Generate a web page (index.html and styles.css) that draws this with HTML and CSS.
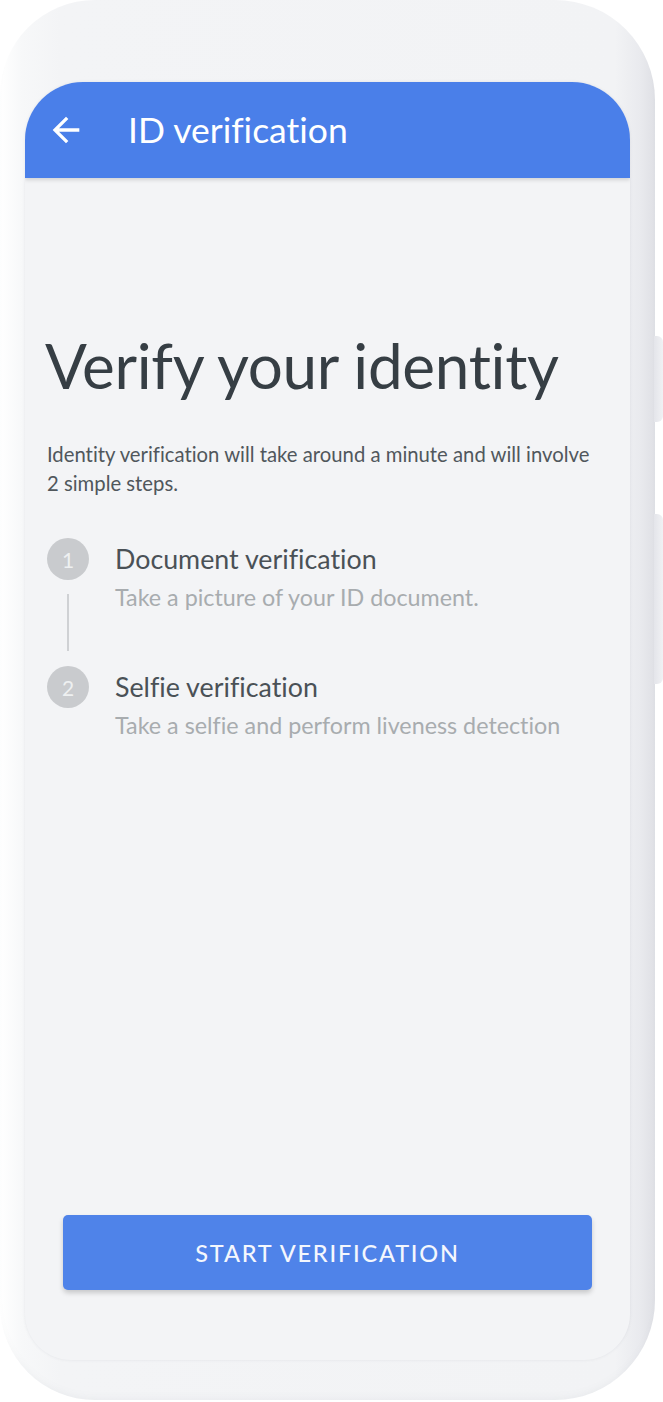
FILE: index.html
```html
<!DOCTYPE html>
<html lang="en">
<head>
<meta charset="utf-8">
<title>ID verification</title>
<link rel="stylesheet" href="styles.css">
</head>
<body>
<div class="phone">
  <div class="screen">
    <header class="appbar">
      <svg class="back" viewBox="0 0 24 24" aria-hidden="true"><path d="M20 11H7.83l5.59-5.59L12 4l-8 8 8 8 1.41-1.41L7.83 13H20v-2z"/></svg>
      <h1 class="appbar-title">ID verification</h1>
    </header>
    <main class="content">
      <h2 class="headline">Verify your identity</h2>
      <p class="intro">Identity verification will take around a minute and will involve 2 simple steps.</p>
      <ol class="steps">
        <li class="step">
          <div class="marker"><span class="dot">1</span><span class="connector"></span></div>
          <div class="step-text">
            <div class="step-title">Document verification</div>
            <div class="step-sub">Take a picture of your ID document.</div>
          </div>
        </li>
        <li class="step">
          <div class="marker"><span class="dot">2</span></div>
          <div class="step-text">
            <div class="step-title">Selfie verification</div>
            <div class="step-sub">Take a selfie and perform liveness detection</div>
          </div>
        </li>
      </ol>
    </main>
    <div class="actions">
      <button class="primary">START VERIFICATION</button>
    </div>
  </div>
</div>
</body>
</html>
```

FILE: styles.css
```css
html, body {
  margin: 0;
  padding: 0;
  background: #ffffff;
}
body {
  width: 663px;
  height: 1402px;
  overflow: hidden;
  font-family: "Lato", "Open Sans", sans-serif;
  font-variant-ligatures: none;
}
.phone {
  position: relative;
  width: 655px;
  height: 1400px;
  box-sizing: border-box;
  padding: 82px 25px 40px 25px;
  border-radius: 95px 100px 100px 95px;
  background: linear-gradient(to right, #ffffff 0px, #f7f8f9 22px, #f3f4f6 60px, #f2f3f5 615px, #e9eaee 640px, #dfe0e5 655px);
  box-shadow: inset 0 -6px 10px -6px rgba(120,125,140,0.10);
}
.phone::before,
.phone::after {
  content: "";
  position: absolute;
  right: -8px;
  width: 9px;
  border-radius: 0 6px 6px 0;
  background: linear-gradient(to right, #e4e5ea, #f0f1f4);
}
.phone::before { top: 336px; height: 86px; }
.phone::after { top: 514px; height: 170px; }
.screen {
  display: flex;
  flex-direction: column;
  height: 1278px;
  background: #f3f4f6;
  border-radius: 58px 58px 46px 46px;
  overflow: hidden;
  box-shadow: 0 0 3px rgba(100,105,120,0.12);
}
.appbar {
  display: flex;
  align-items: center;
  height: 96px;
  flex: none;
  background: #4a7fe9;
  box-shadow: 0 2px 4px rgba(0,0,0,0.14);
  position: relative;
  z-index: 1;
}
.back {
  width: 40px;
  height: 40px;
  margin-left: 21px;
  fill: #ffffff;
}
.appbar-title {
  margin: 0 0 0 42px;
  font-size: 35.5px;
  font-weight: 400;
  color: #ffffff;
  line-height: 1.2;
}
.content {
  flex: 1;
  padding: 150px 20px 0 20px;
}
.headline {
  margin: 0;
  font-size: 62px;
  font-weight: 400;
  letter-spacing: -0.3px;
  line-height: 1.2;
  color: #363e44;
}
.intro {
  margin: 38px 0 0 2px;
  max-width: 556px;
  font-size: 20.3px;
  line-height: 29px;
  color: #50575c;
}
.steps {
  list-style: none;
  margin: 40px 0 0 2px;
  padding: 0;
}
.step {
  display: flex;
}
.marker {
  width: 42px;
  display: flex;
  flex-direction: column;
  align-items: center;
  flex: none;
}
.dot {
  width: 42px;
  height: 42px;
  border-radius: 50%;
  background: #c9cbce;
  color: #eef0f1;
  font-size: 21px;
  display: flex;
  align-items: center;
  justify-content: center;
}
.connector {
  width: 2px;
  height: 57px;
  margin: 14px 0 15px 0;
  background: #cfd1d4;
}
.step-text {
  margin-left: 26px;
}
.step-title {
  margin-top: 5px;
  font-size: 26.8px;
  line-height: 32px;
  color: #4a5156;
}
.step-sub {
  margin-top: 8px;
  font-size: 23.3px;
  line-height: 28px;
  color: #a8acaf;
}
.actions {
  flex: none;
  padding: 0 38px 70px 38px;
}
.primary {
  display: block;
  width: 100%;
  height: 75px;
  border: 0;
  border-radius: 5px;
  background: #4f83e9;
  color: #f4f7fd;
  font-family: "Lato", "Open Sans", sans-serif;
  font-size: 23.5px;
  font-weight: 500;
  letter-spacing: 1.8px;
  box-shadow: 0 3px 5px rgba(0,0,0,0.18);
}
```
